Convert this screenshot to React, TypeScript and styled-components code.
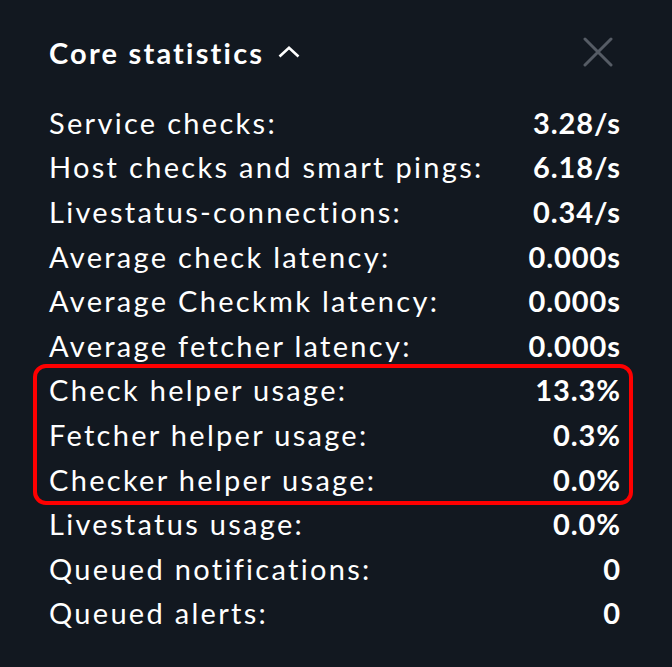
import React from "react";
import styled, { createGlobalStyle } from "styled-components";

const Global = createGlobalStyle`
  html, body { margin: 0; padding: 0; background: #121820; }
  body { font-family: Lato, "Open Sans", sans-serif; }
`;

const Panel = styled.div`
  width: 672px;
  height: 667px;
  box-sizing: border-box;
  background: #121820;
  padding: 29px 52px 0 49px;
  color: #ffffff;
`;

const Header = styled.div`
  display: flex;
  align-items: center;
  justify-content: space-between;
  height: 46px;
  margin-bottom: 25px;
`;

const Title = styled.div`
  display: flex;
  align-items: center;
  gap: 14px;
  font-size: 29px;
  font-weight: 700;
  letter-spacing: 2.2px;
`;

const CloseButton = styled.div`
  width: 30px;
  height: 30px;
  display: flex;
  align-items: center;
  justify-content: center;
  margin-right: 7px;
`;

const Rows = styled.div`
  display: flex;
  flex-direction: column;
`;

const Group = styled.div`
  display: flex;
  flex-direction: column;
  margin: -4px -13px -4px -16px;
  padding: 0 9px 0 12px;
  border: 4px solid #ff0000;
  border-radius: 13px;
`;

const Row = styled.div`
  display: flex;
  justify-content: space-between;
  align-items: center;
  height: 44.6px;
  font-size: 29px;
  letter-spacing: 2.3px;
`;

const Label = styled.span`
  font-weight: 400;
`;

const Value = styled.span`
  font-weight: 700;
  letter-spacing: 0.9px;
  margin-right: -0.9px;
`;

const before: [string, string][] = [
  ["Service checks:", "3.28/s"],
  ["Host checks and smart pings:", "6.18/s"],
  ["Livestatus-connections:", "0.34/s"],
  ["Average check latency:", "0.000s"],
  ["Average Checkmk latency:", "0.000s"],
  ["Average fetcher latency:", "0.000s"],
];
const highlighted: [string, string][] = [
  ["Check helper usage:", "13.3%"],
  ["Fetcher helper usage:", "0.3%"],
  ["Checker helper usage:", "0.0%"],
];
const after: [string, string][] = [
  ["Livestatus usage:", "0.0%"],
  ["Queued notifications:", "0"],
  ["Queued alerts:", "0"],
];

const renderRows = (rows: [string, string][]) =>
  rows.map(([l, v]) => (
    <Row key={l}>
      <Label>{l}</Label>
      <Value>{v}</Value>
    </Row>
  ));

export default function App() {
  return (
    <>
      <Global />
      <Panel>
        <Header>
          <Title>
            Core statistics
            <svg width="22" height="12" viewBox="0 0 22 12">
              <path d="M1.5 10.5 L11 1.8 L20.5 10.5" fill="none" stroke="#fff" strokeWidth="2.6" />
            </svg>
          </Title>
          <CloseButton>
            <svg width="30" height="30" viewBox="0 0 30 30">
              <path d="M2 2 L28 28 M28 2 L2 28" stroke="#565c65" strokeWidth="3" strokeLinecap="round" />
            </svg>
          </CloseButton>
        </Header>
        <Rows>
          {renderRows(before)}
          <Group>{renderRows(highlighted)}</Group>
          {renderRows(after)}
        </Rows>
      </Panel>
    </>
  );
}
